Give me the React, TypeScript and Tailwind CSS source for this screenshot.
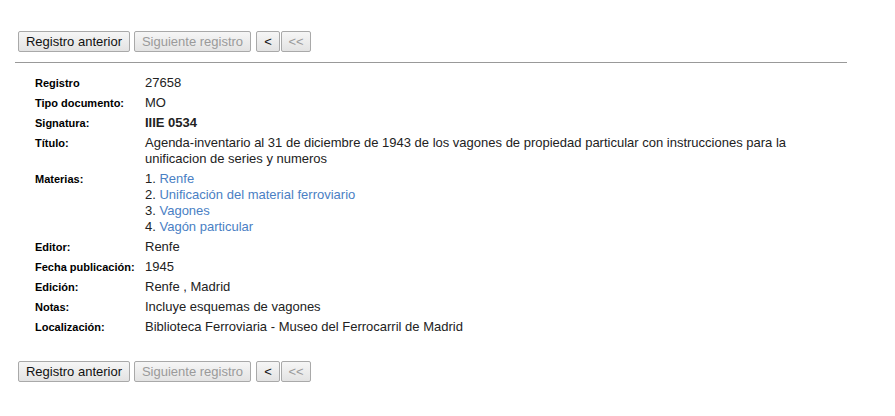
const materias = [
  "Renfe",
  "Unificación del material ferroviario",
  "Vagones",
  "Vagón particular",
];

const rows: { label: string; value: React.ReactNode; bold?: boolean }[] = [
  { label: "Registro", value: "27658" },
  { label: "Tipo documento:", value: "MO" },
  { label: "Signatura:", value: "IIIE 0534", bold: true },
  {
    label: "Título:",
    value:
      "Agenda-inventario al 31 de diciembre de 1943 de los vagones de propiedad particular con instrucciones para la unificacion de series y numeros",
  },
  {
    label: "Materias:",
    value: (
      <ol>
        {materias.map((m, i) => (
          <li key={m}>
            {i + 1}. <a className="text-[#4a80c4] cursor-pointer">{m}</a>
          </li>
        ))}
      </ol>
    ),
  },
  { label: "Editor:", value: "Renfe" },
  { label: "Fecha publicación:", value: "1945" },
  { label: "Edición:", value: "Renfe , Madrid" },
  { label: "Notas:", value: "Incluye esquemas de vagones" },
  { label: "Localización:", value: "Biblioteca Ferroviaria - Museo del Ferrocarril de Madrid" },
];

function NavButtons() {
  const btn =
    "h-[21px] border border-[#a9a9a9] rounded-[2px] bg-gradient-to-b from-[#f6f6f6] to-[#e3e3e3] text-[13px] leading-none text-center";
  return (
    <div className="flex items-center pl-[18px]">
      <button className={`${btn} w-[112px] text-[#111]`}>Registro anterior</button>
      <button disabled className={`${btn} w-[117px] ml-[4px] text-[#9a9a9a]`}>Siguiente registro</button>
      <button className={`${btn} w-[24px] ml-[5px] text-[#111]`}>&lt;</button>
      <button disabled className={`${btn} w-[30px] ml-[1px] text-[#9a9a9a]`}>&lt;&lt;</button>
    </div>
  );
}

export default function App() {
  return (
    <div
      className="w-[895px] h-[416px] bg-white pt-[31px] text-[#222]"
      style={{ fontFamily: '"Liberation Sans", Arial, sans-serif' }}
    >
      <NavButtons />
      <div className="ml-[15px] w-[832px] mt-[10px] border-t border-[#999]" />
      <div className="ml-[15px] w-[832px] pt-[10px] pl-[20px]">
        {rows.map((r) => (
          <div key={r.label} className="flex py-[2px] text-[13px] leading-[16px]">
            <div className="w-[110px] shrink-0 font-bold text-[11px] text-black">{r.label}</div>
            <div className={`flex-1 ${r.bold ? "font-bold" : ""}`}>{r.value}</div>
          </div>
        ))}
      </div>
      <div className="mt-[24px]">
        <NavButtons />
      </div>
    </div>
  );
}
